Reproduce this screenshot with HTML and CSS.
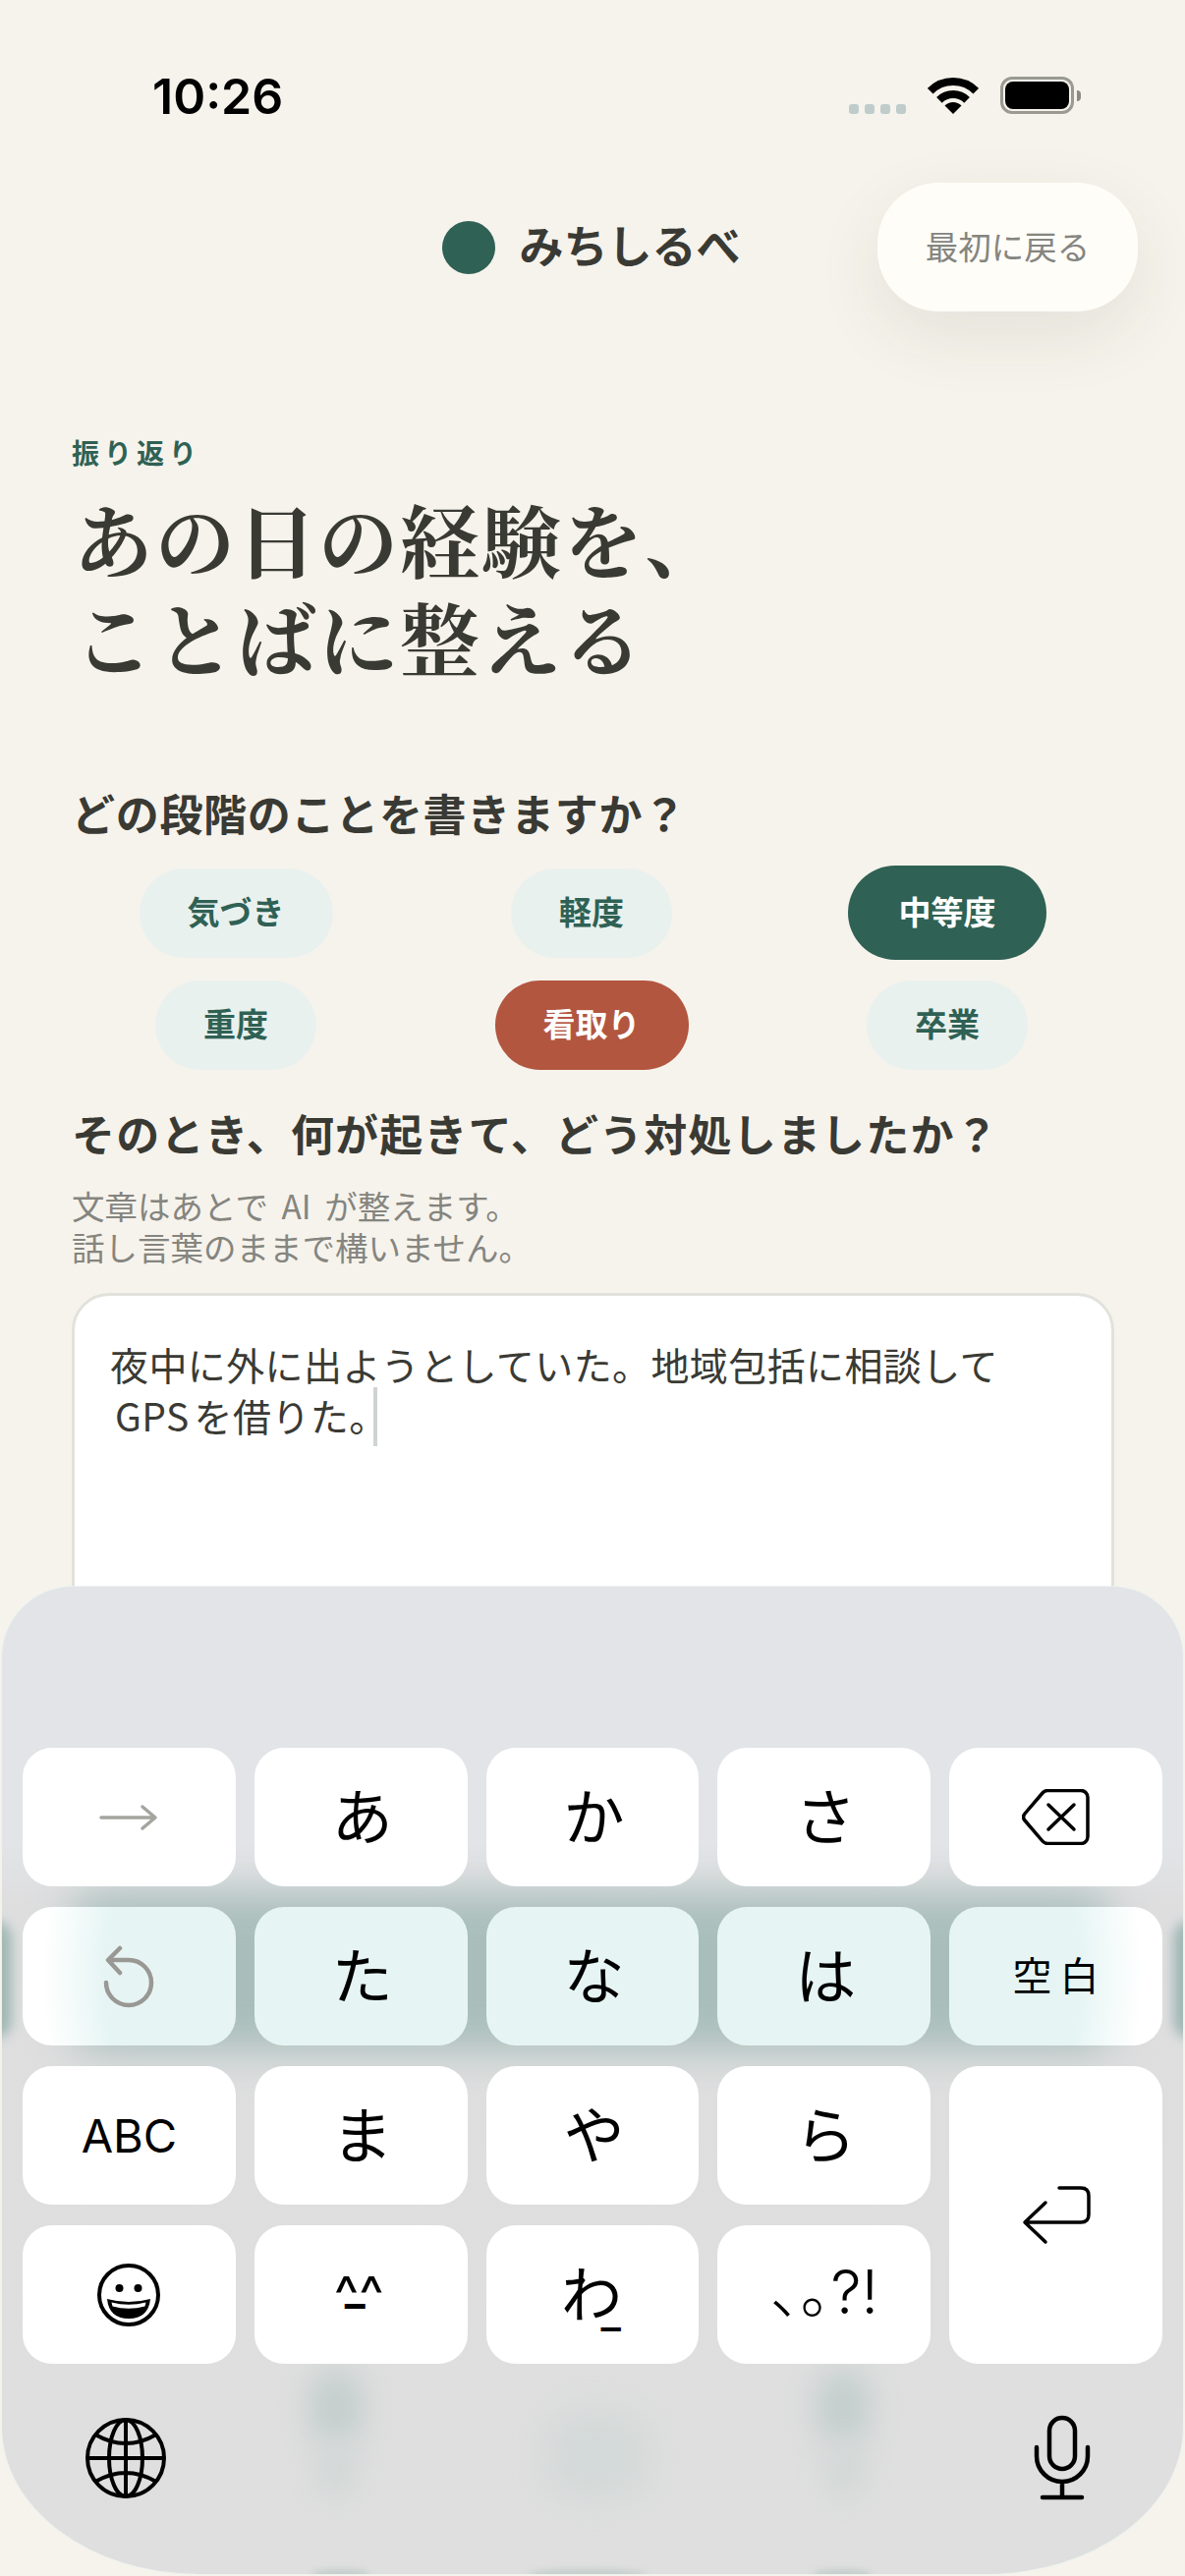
FILE: index.html
```html
<!DOCTYPE html>
<html lang="ja">
<head>
    <meta charset="UTF-8">
    <meta name="viewport" content="width=device-width, initial-scale=1.0">
    <title>みちしるべ - 振り返り</title>
    <link rel="stylesheet" href="styles.css">
</head>
<body>
<div class="phone">

    <div class="status-bar">
        <span class="clock">10:26</span>
        <div class="status-icons">
            <div class="signal"><i></i><i></i><i></i><i></i></div>
            <svg class="wifi" viewBox="0 0 52 38">
                <path d="M2.7 14.7A33 33 0 0 1 49.3 14.7" fill="none" stroke="#000" stroke-width="8"/>
                <path d="M11.9 23.9A20 20 0 0 1 40.1 23.9" fill="none" stroke="#000" stroke-width="8"/>
                <path d="M26 38L17.5 29.5A12 12 0 0 1 34.5 29.5Z" fill="#000"/>
            </svg>
            <div class="battery"><div class="battery-level"></div></div>
            <div class="battery-nub"></div>
        </div>
    </div>

    <header class="top-bar">
        <div class="brand">
            <span class="brand-dot"></span>
            <span class="brand-name">みちしるべ</span>
        </div>
        <button class="back-button">最初に戻る</button>
    </header>

    <main class="content">
        <p class="eyebrow">振り返り</p>
        <h1 class="title">あの日の経験を、<br>ことばに整える</h1>

        <h2 class="question question-first">どの段階のことを書きますか？</h2>
        <div class="stages">
            <span class="chip">気づき</span>
            <span class="chip">軽度</span>
            <span class="chip chip-active">中等度</span>
            <span class="chip">重度</span>
            <span class="chip chip-alert">看取り</span>
            <span class="chip">卒業</span>
        </div>

        <h2 class="question question-second">そのとき、何が起きて、どう対処しましたか？</h2>
        <p class="hint">文章はあとで AI が整えます。<br>話し言葉のままで構いません。</p>
        <div class="entry">夜中に外に出ようとしていた。地域包括に相談して<br><span class="entry-latin">GPS</span>を借りた。<span class="caret"></span></div>
    </main>

    <div class="keyboard">
        <div class="glow glow-band"></div>
        <div class="glow glow-edge-left"></div>
        <div class="glow glow-edge-right"></div>
        <div class="glow glow-blob-a"></div>
        <div class="glow glow-blob-a2"></div>
        <div class="glow glow-blob-b"></div>
        <div class="glow glow-blob-b2"></div>
        <div class="glow glow-blob-c"></div>
        <div class="glow glow-foot-a"></div>
        <div class="glow glow-foot-b"></div>
        <div class="glow glow-foot-c"></div>

        <div class="keys">
            <div class="key">
                <svg class="icon-next" viewBox="0 0 60 28"><path d="M2 14H57M44 3L57 14L44 25" fill="none" stroke="#a5a5a0" stroke-width="3.5" stroke-linecap="round" stroke-linejoin="round"/></svg>
            </div>
            <div class="key key-kana">あ</div>
            <div class="key key-kana">か</div>
            <div class="key key-kana">さ</div>
            <div class="key">
                <svg class="icon-delete" viewBox="0 0 69 57">
                    <path d="M26 1.5H60A7 7 0 0 1 67 8.5V48.5A7 7 0 0 1 60 55.5H26A7 7 0 0 1 21 53L3 32A5.5 5.5 0 0 1 3 25L21 4A7 7 0 0 1 26 1.5Z" fill="none" stroke="#000" stroke-width="3.5"/>
                    <path d="M27 16L53 41M53 16L27 41" fill="none" stroke="#000" stroke-width="3.5" stroke-linecap="round"/>
                </svg>
            </div>

            <div class="key key-tint-left">
                <svg class="icon-undo" viewBox="0 0 54 64"><path d="M4 38A23 23 0 1 0 27 15H7M18 3L6 15L18 28" fill="none" stroke="#9a9894" stroke-width="4.5" stroke-linecap="round" stroke-linejoin="round"/></svg>
            </div>
            <div class="key key-kana key-tint">た</div>
            <div class="key key-kana key-tint">な</div>
            <div class="key key-kana key-tint">は</div>
            <div class="key key-tint-right key-small">空白</div>

            <div class="key key-latin">ABC</div>
            <div class="key key-kana">ま</div>
            <div class="key key-kana">や</div>
            <div class="key key-kana">ら</div>
            <div class="key key-return">
                <svg class="icon-return" viewBox="0 0 74 64"><path d="M26 19L5 39L26 59M5 39H62Q70 39 70 31V12Q70 4 62 4H40" fill="none" stroke="#000" stroke-width="3.5" stroke-linecap="round" stroke-linejoin="round"/></svg>
            </div>

            <div class="key">
                <svg class="icon-emoji" viewBox="0 0 66 66">
                    <circle cx="33" cy="33" r="30" fill="none" stroke="#000" stroke-width="4"/>
                    <circle cx="23.5" cy="26" r="4" fill="#000"/>
                    <circle cx="42.5" cy="26" r="4" fill="#000"/>
                    <path d="M11 37Q33 43 55 37Q53 57 33 57Q13 57 11 37Z" fill="#000"/>
                    <path d="M15.5 40.5Q33 45 50.5 40.5L49.5 44.5Q33 49 16.5 44.5Z" fill="#fff"/>
                </svg>
            </div>
            <div class="key key-face">^^<span class="face-mouth">_</span></div>
            <div class="key key-kana key-wa">わ<span class="wa-mark">_</span></div>
            <div class="key key-punct">、。?!</div>
        </div>

        <div class="keyboard-foot">
            <svg class="icon-globe" viewBox="0 0 84 84" fill="none" stroke="#000" stroke-width="4">
                <circle cx="42" cy="42" r="39"/>
                <ellipse cx="42" cy="42" rx="17" ry="39"/>
                <path d="M42 3V81M3 42H81M11 18Q42 36 73 18M11 66Q42 48 73 66"/>
            </svg>
            <svg class="icon-mic" viewBox="0 0 62 88" fill="none" stroke="#000" stroke-width="4.5" stroke-linecap="round">
                <rect x="18" y="3" width="26" height="52" rx="13"/>
                <path d="M5 33V42A26 26 0 0 0 57 42V33M31 68V84M11 84H51"/>
            </svg>
        </div>
    </div>

</div>
</body>
</html>
```

FILE: styles.css
```css
* {
    box-sizing: border-box;
}
html, body {
    margin: 0;
    padding: 0;
}
body {
    background-color: #f6f3ec;
    font-family: "Noto Sans CJK JP", sans-serif;
    color: #3a3a34;
}
.phone {
    position: relative;
    width: 1206px;
    height: 2622px;
    overflow: hidden;
    background-color: #f6f3ec;
}

/* status bar */
.status-bar {
    display: flex;
    justify-content: space-between;
    align-items: flex-start;
    height: 186px;
    padding: 68px 106px 0 155px;
}
.clock {
    font-family: Inter, sans-serif;
    font-size: 50px;
    font-weight: 600;
    line-height: 60px;
    color: #000;
}
.status-icons {
    display: flex;
    align-items: flex-start;
    padding-top: 10px;
}
.signal {
    display: flex;
    gap: 6px;
    margin: 28px 22px 0 0;
}
.signal i {
    display: block;
    width: 10px;
    height: 10px;
    border-radius: 3px;
    background-color: #bfcccb;
}
.wifi {
    width: 52px;
    height: 38px;
    margin-right: 22px;
}
.battery {
    width: 75px;
    height: 38px;
    padding: 2px;
    border: 3px solid #9a9a92;
    border-radius: 12px;
}
.battery-level {
    width: 100%;
    height: 100%;
    border-radius: 8px;
    background-color: #000;
}
.battery-nub {
    width: 4px;
    height: 11px;
    margin: 14px 0 0 3px;
    border-radius: 0 4px 4px 0;
    background-color: #8a8a84;
}

/* header */
.top-bar {
    display: grid;
    grid-template-columns: 1fr auto 1fr;
    align-items: center;
    padding: 0 48px;
}
.brand {
    grid-column: 2;
    display: flex;
    align-items: center;
    gap: 24px;
    margin-left: -2px;
}
.brand-dot {
    width: 54px;
    height: 54px;
    border-radius: 50%;
    background-color: #2f6154;
}
.brand-name {
    padding-bottom: 6px;
    font-size: 45px;
    font-weight: 700;
    line-height: 54px;
}
.back-button {
    grid-column: 3;
    justify-self: end;
    width: 265px;
    height: 131px;
    padding-bottom: 5px;
    border: none;
    border-radius: 62px;
    background-color: #fffdf8;
    box-shadow: 0 24px 70px rgba(60, 50, 30, 0.09);
    font-family: inherit;
    font-size: 33.5px;
    color: #85857f;
}

/* main column */
.content {
    padding: 125px 72px 0 73px;
}
.eyebrow {
    margin: 0;
    font-size: 28px;
    font-weight: 700;
    line-height: 36px;
    letter-spacing: 5px;
    color: #2f6154;
}
.title {
    margin: 19px 0 0;
    padding-left: 2px;
    font-family: "Noto Serif CJK JP", "Noto Sans CJK JP", serif;
    font-size: 81px;
    font-weight: 700;
    line-height: 100px;
    letter-spacing: 2px;
}
.question {
    margin: 0;
    font-size: 44px;
    font-weight: 700;
    line-height: 60px;
    white-space: nowrap;
}
.question-first {
    margin-top: 100px;
    letter-spacing: 0.7px;
}
.question-second {
    margin-top: 34px;
    letter-spacing: 1.2px;
}
.stages {
    display: grid;
    grid-template-columns: repeat(3, 1fr);
    grid-template-rows: 96px 91px;
    column-gap: 28px;
    row-gap: 21px;
    align-items: center;
    justify-items: center;
    margin: 24px 3px 0 0;
}
.chip {
    display: flex;
    align-items: center;
    height: 91px;
    padding: 0 49px 5px;
    border-radius: 46px;
    background-color: #e9f1ee;
    font-size: 33px;
    font-weight: 600;
    color: #2f6154;
}
.chip-active {
    height: 96px;
    padding: 0 51.5px 5px;
    border-radius: 48px;
    background-color: #2f6154;
    color: #fff;
}
.chip-alert {
    background-color: #b25640;
    color: #fff;
}
.hint {
    margin: 23px 0 0;
    font-size: 33.5px;
    line-height: 42px;
    word-spacing: 6px;
    color: #85857f;
}
.entry {
    height: 400px;
    margin-top: 26px;
    padding: 43px 36px 0;
    border: 3px solid #e2e2dc;
    border-radius: 38px;
    background-color: #fff;
    font-size: 39px;
    line-height: 52px;
    letter-spacing: 0.4px;
    white-space: nowrap;
}
.entry-latin {
    margin: 0 5px;
}
.caret {
    display: inline-block;
    width: 4px;
    height: 60px;
    margin-left: -15px;
    background-color: #cfd3d1;
    vertical-align: middle;
    transform: translateY(-4px);
}

/* keyboard */
.keyboard {
    position: absolute;
    left: 2px;
    right: 2px;
    top: 1615px;
    height: 1005px;
    overflow: hidden;
    border-radius: 72px 72px 200px 200px / 72px 72px 150px 150px;
    background: linear-gradient(to bottom, #e2e4e8 0, #e2e4e7 260px, #dededf 320px, #dfdfdf 100%);
    box-shadow: 0 0 0 1px rgba(232, 244, 240, 0.8);
}
.glow {
    position: absolute;
}
.glow-band {
    left: 70px;
    top: 312px;
    width: 1060px;
    height: 160px;
    border-radius: 30px;
    background-color: #a9bebb;
    filter: blur(20px);
}
.glow-edge-left {
    left: -26px;
    top: 340px;
    width: 36px;
    height: 120px;
    border-radius: 18px;
    background-color: #a0b8b4;
    filter: blur(6px);
}
.glow-edge-right {
    right: -26px;
    top: 340px;
    width: 36px;
    height: 120px;
    border-radius: 18px;
    background-color: #a0b8b4;
    filter: blur(6px);
}
.glow-blob-a, .glow-blob-b {
    top: 795px;
    width: 56px;
    height: 80px;
    border-radius: 50%;
    background-color: #c2cecc;
    filter: blur(16px);
}
.glow-blob-a {
    left: 312px;
}
.glow-blob-b {
    left: 828px;
}
.glow-blob-a2, .glow-blob-b2 {
    top: 870px;
    width: 44px;
    height: 60px;
    border-radius: 50%;
    background-color: #d2d8d7;
    filter: blur(14px);
}
.glow-blob-a2 {
    left: 318px;
}
.glow-blob-b2 {
    left: 836px;
}
.glow-blob-c {
    left: 550px;
    top: 840px;
    width: 110px;
    height: 90px;
    border-radius: 40%;
    background-color: #d3d9d8;
    filter: blur(18px);
}
.glow-foot-a, .glow-foot-b, .glow-foot-c {
    top: 1000px;
    height: 12px;
    border-radius: 50%;
    background-color: #c4cdcb;
    filter: blur(3px);
}
.glow-foot-a {
    left: 315px;
    width: 60px;
}
.glow-foot-b {
    left: 535px;
    width: 120px;
}
.glow-foot-c {
    left: 825px;
    width: 60px;
}
.keys {
    position: relative;
    display: grid;
    grid-template-columns: repeat(5, 1fr);
    grid-auto-rows: 141px;
    gap: 21px 19px;
    padding: 164px 21px 0;
}
.key {
    display: flex;
    align-items: center;
    justify-content: center;
    border-radius: 30px;
    background-color: #fff;
    line-height: 1;
    color: #000;
}
.key-kana {
    padding: 0 0 8px 3px;
    font-size: 62px;
}
.key-tint {
    background-color: #e6f5f4;
}
.key-tint-left {
    background: radial-gradient(ellipse 165px 270px at 85% 50%, #e6f5f4 62%, #f4fbfa 82%, #ffffff 100%);
}
.key-tint-right {
    background: radial-gradient(ellipse 165px 270px at 15% 50%, #e6f5f4 62%, #f4fbfa 82%, #ffffff 100%);
}
.key-small {
    padding: 0 0 6px 8px;
    font-size: 40px;
    letter-spacing: 8px;
}
.key-latin {
    font-family: Inter, sans-serif;
    font-size: 47px;
}
.key-return {
    grid-column: 5;
    grid-row: 3 / span 2;
}
.key-face {
    position: relative;
    padding-right: 4px;
    font-family: Inter, sans-serif;
    font-size: 54px;
}
.face-mouth {
    position: absolute;
    left: 92px;
    top: 42px;
    font-size: 44px;
    font-weight: 700;
}
.key-wa {
    position: relative;
    padding: 0 2px 8px 0;
}
.wa-mark {
    position: absolute;
    left: 117px;
    top: 66px;
    font-family: Inter, sans-serif;
    font-size: 44px;
    font-weight: 500;
}
.key-punct {
    padding-bottom: 6px;
    font-family: Inter, "Noto Sans CJK JP", sans-serif;
    font-size: 62px;
    font-weight: 300;
    font-feature-settings: "halt";
}
.keyboard-foot {
    position: relative;
    display: flex;
    justify-content: space-between;
    align-items: center;
    padding: 52px 92px 0 84px;
}
.icon-next {
    width: 60px;
    height: 28px;
}
.icon-delete {
    width: 69px;
    height: 57px;
}
.icon-undo {
    width: 54px;
    height: 64px;
}
.icon-return {
    width: 74px;
    height: 64px;
}
.icon-emoji {
    width: 66px;
    height: 66px;
}
.icon-globe {
    width: 84px;
    height: 84px;
}
.icon-mic {
    width: 62px;
    height: 88px;
}
```
